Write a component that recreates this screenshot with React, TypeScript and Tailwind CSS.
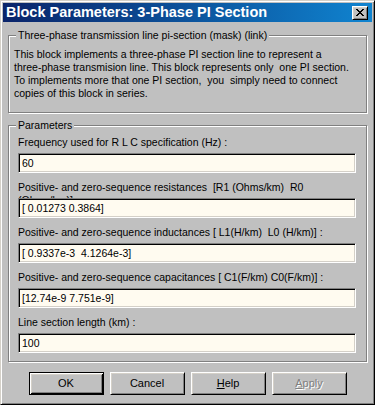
import React from "react";

const rows: { label: string; value: string }[] = [
  { label: "Frequency used for R L C specification (Hz) :", value: "60" },
  {
    label: "Positive- and zero-sequence resistances  [R1 (Ohms/km)  R0 (Ohms/km)] :",
    value: "[ 0.01273 0.3864]",
  },
  {
    label: "Positive- and zero-sequence inductances [ L1(H/km)  L0 (H/km)] :",
    value: "[ 0.9337e-3  4.1264e-3]",
  },
  {
    label: "Positive- and zero-sequence capacitances [ C1(F/km) C0(F/km)] :",
    value: "[12.74e-9 7.751e-9]",
  },
  { label: "Line section length (km) :", value: "100" },
];

const description = [
  "This block implements a three-phase PI section line to represent a",
  "three-phase transmision line. This block represents only  one PI section.",
  "To implements more that one PI section,  you  simply need to connect",
  "copies of this block in series.",
];

export default function App() {
  return (
    <div className="flex h-[405px] w-[375px] flex-col border border-t-[#d4d0c8] border-l-[#d4d0c8] border-b-black border-r-black bg-[#c0c0c0] p-[2px] font-['Liberation_Sans',Arial,sans-serif] text-[10.5px] leading-[13px] text-black shadow-[inset_1px_1px_0_#fff,inset_-1px_-1px_0_#808080]">
      {/* Title bar */}
      <div className="flex h-[19px] shrink-0 items-center justify-between bg-gradient-to-r from-[#0a246a] to-[#1084d0] pl-[3px] pr-[4px]">
        <span className="text-[14.5px] font-bold leading-[19px] text-white">
          Block Parameters: 3-Phase PI Section
        </span>
        <CloseButton />
      </div>

      <div className="flex flex-col px-[5px]">
        <Group title="Three-phase transmission line pi-section (mask) (link)" className="mt-[7px]">
          <div className="pb-[12px] pl-[5px] pt-[6px]">
            {description.map((line) => (
              <div key={line} className="whitespace-pre">
                {line}
              </div>
            ))}
          </div>
        </Group>

        <Group title="Parameters" className="mt-[6px]">
          <div className="flex flex-col pb-[8px] pl-[9px] pr-[10px] pt-[4px]">
            {rows.map((r, i) => (
              <div key={r.label} className={i < rows.length - 1 ? "mb-[8px]" : ""}>
                <div className="h-[17px] whitespace-pre-wrap">{r.label}</div>
                <input
                  readOnly
                  defaultValue={r.value}
                  className="relative block h-[20px] w-full border border-t-[#808080] border-l-[#808080] border-b-white border-r-white bg-[#fffbf0] pl-[3px] text-[10.5px] text-black shadow-[inset_1px_1px_0_#000,inset_-1px_-1px_0_#d4d0c8] outline-none"
                />
              </div>
            ))}
          </div>
        </Group>

        <div className="mt-[10px] flex justify-center gap-[6px]">
          <Button primary>OK</Button>
          <Button>Cancel</Button>
          <Button>
            <span className="underline">H</span>elp
          </Button>
          <Button disabled>
            <span className="underline">A</span>pply
          </Button>
        </div>
      </div>
    </div>
  );
}

function Group({
  title,
  className = "",
  children,
}: {
  title: string;
  className?: string;
  children: React.ReactNode;
}) {
  return (
    <fieldset
      className={`border border-[#808080] shadow-[inset_1px_1px_0_#fff,1px_1px_0_#fff] ${className}`}
    >
      <legend className="ml-[7px] bg-[#c0c0c0] px-[2px] leading-[13px]">{title}</legend>
      {children}
    </fieldset>
  );
}

function Button({
  children,
  primary = false,
  disabled = false,
}: {
  children: React.ReactNode;
  primary?: boolean;
  disabled?: boolean;
}) {
  return (
    <button
      type="button"
      className={`flex h-[23px] w-[75px] items-center justify-center bg-[#c0c0c0] text-[11px] ${
        primary
          ? "border border-black shadow-[inset_1px_1px_0_#fff,inset_-1px_-1px_0_#000,inset_2px_2px_0_#d4d0c8,inset_-2px_-2px_0_#808080]"
          : "border border-t-white border-l-white border-b-black border-r-black shadow-[inset_1px_1px_0_#d4d0c8,inset_-1px_-1px_0_#808080]"
      } ${disabled ? "text-[#808080] [text-shadow:1px_1px_0_#fff]" : "text-black"}`}
    >
      <span>{children}</span>
    </button>
  );
}

function CloseButton() {
  return (
    <div className="flex h-[14px] w-[16px] items-center justify-center border border-t-white border-l-white border-b-black border-r-black bg-[#c0c0c0] shadow-[inset_1px_1px_0_#d4d0c8,inset_-1px_-1px_0_#808080]">
      <svg width="8" height="7" viewBox="0 0 8 7" shapeRendering="crispEdges">
        <path
          d="M0 0h2v1H0zM6 0h2v1H6zM1 1h2v1H1zM5 1h2v1H5zM2 2h4v1H2zM3 3h2v1H3zM2 4h4v1H2zM1 5h2v1H1zM5 5h2v1H5zM0 6h2v1H0zM6 6h2v1H6z"
          fill="#000"
        />
      </svg>
    </div>
  );
}
